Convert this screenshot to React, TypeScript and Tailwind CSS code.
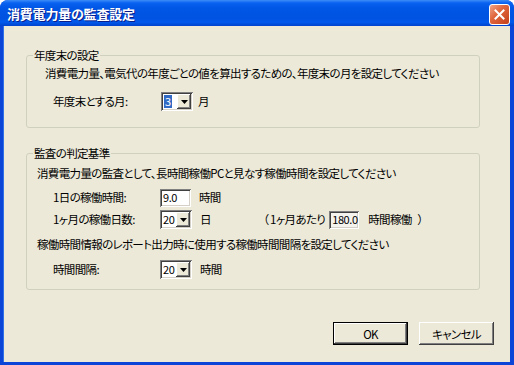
import React from "react";

const sunken =
  "shadow-[inset_1px_1px_#808080,inset_-1px_-1px_#ffffff,inset_2px_2px_#404040,inset_-2px_-2px_#D4D0C8]";
const raised =
  "shadow-[inset_-1px_-1px_#404040,inset_1px_1px_#ffffff,inset_-2px_-2px_#808080,inset_2px_2px_#ECE9D8]";

function Combo({ value, selected = false }: { value: string; selected?: boolean }) {
  return (
    <div className={`w-[32px] h-[19px] flex bg-white p-[2px] ${sunken}`}>
      <div className="flex-1 flex items-center pl-[1px] overflow-hidden">
        <span
          className={`leading-[13px] text-[11px] tracking-[-0.4px] ${selected ? "bg-[#316AC5] text-white px-[1px]" : "text-black"}`}
        >
          {value}
        </span>
      </div>
      <div className={`w-[14px] h-full bg-[#ECE9D8] flex items-center justify-center ${raised}`}>
        <svg width="7" height="4" viewBox="0 0 7 4">
          <path d="M0 0H7L3.5 4Z" fill="#000" />
        </svg>
      </div>
    </div>
  );
}

function TextBox({ value, disabled = false, w }: { value: string; disabled?: boolean; w: string }) {
  return (
    <div
      className={`${w} h-[18px] flex items-center pl-[3px] ${disabled ? "bg-[#F4F3EE]" : "bg-white"} ${sunken}`}
    >
      <span className="text-[11px] leading-[13px] tracking-[-0.4px] text-black">{value}</span>
    </div>
  );
}

function GroupBox({
  title,
  className,
  children,
}: {
  title: string;
  className: string;
  children: React.ReactNode;
}) {
  return (
    <div className={`relative border border-[#D0D0BF] rounded-[3px] ${className}`}>
      <span className="absolute left-[6px] top-[-9px] px-[1px] bg-[#ECE9D8] leading-[16px] text-black">
        {title}
      </span>
      {children}
    </div>
  );
}

function Button({ label, isDefault = false }: { label: string; isDefault?: boolean }) {
  return (
    <div
      className={`w-[75px] h-[23px] flex items-center justify-center bg-[#ECE9D8] text-black ${
        isDefault
          ? "border border-black shadow-[inset_-1px_-1px_#404040,inset_1px_1px_#ffffff,inset_-2px_-2px_#808080]"
          : raised
      }`}
    >
      <span className="leading-[14px]">{label}</span>
    </div>
  );
}

export default function App() {
  return (
    <div className="w-[514px] h-[365px] bg-white text-[11.5px] [font-family:'Noto_Sans_CJK_JP','Noto_Sans_CJK_SC',sans-serif] [font-feature-settings:'palt'] tracking-[-0.65px]">
      <div className="w-full h-full flex flex-col rounded-t-[8px] overflow-hidden bg-[#0A45D8]">
        {/* Title bar */}
        <div className="h-[26px] shrink-0 flex items-center justify-between pt-[2px] pl-[7px] pr-[4px] bg-[linear-gradient(to_bottom,#3C8CF8_0px,#0A62F0_3px,#0056E6_8px,#0053E1_18px,#0059EC_22px,#0043CC_26px)]">
          <span className="text-white font-bold text-[13px] tracking-[-0.2px] [text-shadow:1px_1px_#0A1E8A]">
            消費電力量の監査設定
          </span>
          <div className="w-[21px] h-[21px] rounded-[3px] border border-white bg-[linear-gradient(135deg,#F0A58A_0%,#E0673E_40%,#C4401A_100%)] flex items-center justify-center">
            <svg width="11" height="11" viewBox="0 0 11 11">
              <path d="M1.5 1.5L9.5 9.5M9.5 1.5L1.5 9.5" stroke="#fff" strokeWidth="2" strokeLinecap="square" />
            </svg>
          </div>
        </div>

        {/* Body */}
        <div className="flex-1 ml-[3px] mr-[4px] mb-[3px] bg-[#ECE9D8] flex flex-col border-l border-[#2F6FE8]">
          <GroupBox title="年度末の設定" className="mt-[29px] ml-[22px] w-[454px] h-[73px] pt-[9px]">
            <div className="pl-[18px] leading-[16px] text-black whitespace-nowrap">
              消費電力量、電気代の年度ごとの値を算出するための、年度末の月を設定してください
            </div>
            <div className="mt-[11px] pl-[26px] flex items-center h-[19px]">
              <span className="w-[108px] text-black">年度末とする月:</span>
              <Combo value="3" selected />
              <span className="ml-[5px] text-black">月</span>
            </div>
          </GroupBox>

          <GroupBox title="監査の判定基準" className="mt-[25px] ml-[22px] w-[454px] h-[137px] pt-[11px]">
            <div className="pl-[10px] leading-[16px] text-black whitespace-nowrap">
              消費電力量の監査として、長時間稼働PCと見なす稼働時間を設定してください
            </div>
            <div className="mt-[7px] pl-[26px] flex items-center h-[19px]">
              <span className="w-[107px] text-black">1日の稼働時間:</span>
              <TextBox value="9.0" w="w-[31px]" />
              <span className="ml-[8px] text-black">時間</span>
            </div>
            <div className="mt-[3px] pl-[26px] flex items-center h-[19px]">
              <span className="w-[107px] text-black">1ヶ月の稼働日数:</span>
              <Combo value="20" />
              <span className="ml-[8px] w-[63px] text-black">日</span>
              <span className="text-black">（</span>
              <span className="ml-[2px] text-black">1ヶ月あたり</span>
              <div className="ml-[4px]">
                <TextBox value="180.0" disabled w="w-[30px]" />
              </div>
              <span className="ml-[9px] text-black">時間稼働</span>
              <span className="ml-[6px] text-black">）</span>
            </div>
            <div className="mt-[7px] pl-[10px] leading-[16px] text-black whitespace-nowrap">
              稼働時間情報のレポート出力時に使用する稼働時間間隔を設定してください
            </div>
            <div className="mt-[8px] pl-[26px] flex items-center h-[19px]">
              <span className="w-[107px] text-black">時間間隔:</span>
              <Combo value="20" />
              <span className="ml-[8px] text-black">時間</span>
            </div>
          </GroupBox>

          <div className="mt-[32px] flex justify-end gap-[11px] pr-[16px]">
            <Button label="OK" isDefault />
            <Button label="キャンセル" />
          </div>
        </div>
      </div>
    </div>
  );
}
